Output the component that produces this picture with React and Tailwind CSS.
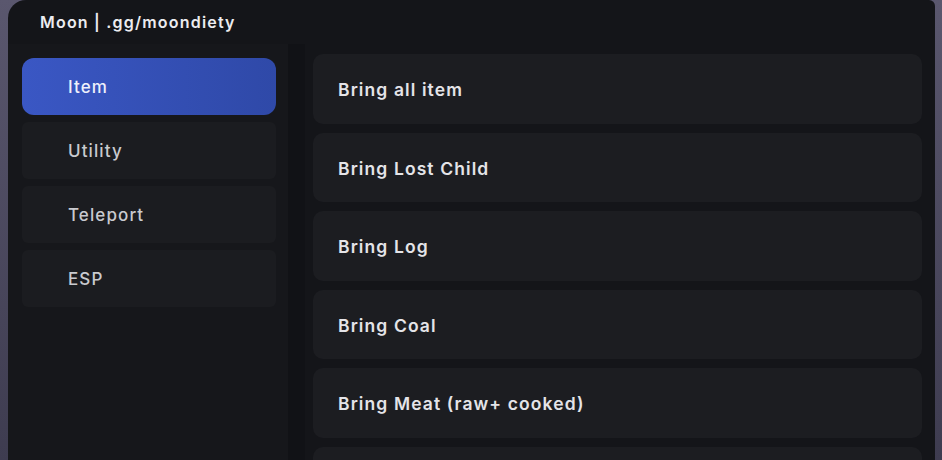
const tabs = ['Item', 'Utility', 'Teleport', 'ESP']

const actions = [
  'Bring all item',
  'Bring Lost Child',
  'Bring Log',
  'Bring Coal',
  'Bring Meat (raw+ cooked)',
  '',
]

export default function App() {
  const active = 'Item'

  return (
    <div className="w-[942px] h-[460px] overflow-hidden bg-gradient-to-b from-[#5a576e] to-[#3e3c50] font-['Inter',sans-serif]">
      <div className="ml-[8px] mr-[7px] h-[460px] rounded-tl-[18px] rounded-tr-[6px] bg-[#141519] flex flex-col overflow-hidden">
        {/* title */}
        <div className="h-[44px] shrink-0 flex items-center pl-[32px]">
          <span className="text-[16px] font-semibold text-[#ececf0] tracking-[1.2px]">Moon | .gg/moondiety</span>
        </div>

        <div className="flex flex-1 min-h-0">
          {/* sidebar */}
          <div className="w-[280px] shrink-0 bg-[#16171b] pl-[14px] pt-[14px] flex flex-col gap-[7px]">
            {tabs.map((t) =>
              t === active ? (
                <div
                  key={t}
                  className="w-[254px] h-[57px] rounded-[12px] bg-gradient-to-r from-[#3a57c4] to-[#2f49a8] flex items-center pl-[46px] pt-[3px] text-[17px] font-medium tracking-[1.1px] text-[#eef0fb]"
                >
                  {t}
                </div>
              ) : (
                <div
                  key={t}
                  className="w-[254px] h-[57px] rounded-[6px] bg-[#1b1c20] flex items-center pl-[46px] pt-[3px] text-[17px] font-medium tracking-[1.1px] text-[#c9cacf]"
                >
                  {t}
                </div>
              )
            )}
          </div>

          {/* divider */}
          <div className="w-[17px] shrink-0 bg-[#111216]" />

          {/* content */}
          <div className="flex-1 bg-[#141519] pl-[8px] pr-[13px] pt-[10px] flex flex-col gap-[9px]">
            {actions.map((a, i) => (
              <div
                key={i}
                className="h-[69.5px] shrink-0 rounded-[10px] bg-[#1c1d21] flex items-center pl-[25px] pt-[3px] text-[17.5px] font-semibold tracking-[1.1px] text-[#e4e4e8]"
              >
                {a}
              </div>
            ))}
          </div>
        </div>
      </div>
    </div>
  )
}
